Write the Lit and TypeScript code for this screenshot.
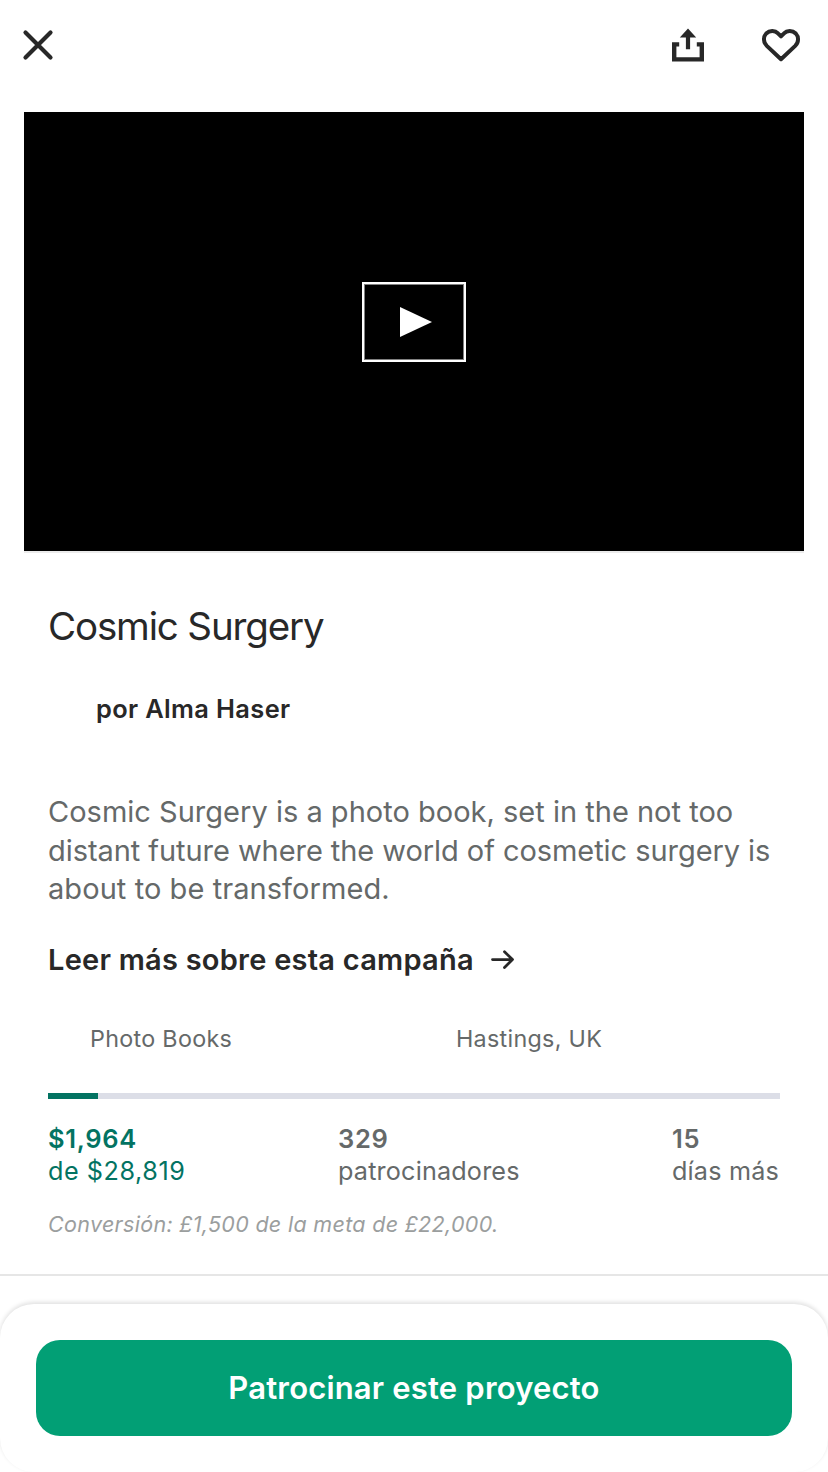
import { LitElement, html, css } from "lit";
import { customElement, property } from "lit/decorators.js";

@customElement("funding-bar")
class FundingBar extends LitElement {
  @property({ type: Number }) percent = 0;

  static styles = css`
    :host { display: block; height: 6px; background: #dcdee7; }
    .fill { height: 6px; background: #037362; }
  `;

  render() {
    return html`<div class="fill" style="width:${this.percent}%"></div>`;
  }
}

@customElement("app-root")
class AppRoot extends LitElement {
  static styles = css`
    :host {
      display: flex;
      flex-direction: column;
      height: 1472px;
      overflow: hidden;
      background: #fff;
      color: #282828;
      font-family: Inter, "Liberation Sans", sans-serif;
    }
    svg { display: block; }
    .toolbar { display: flex; align-items: center; height: 88px; padding: 1px 27px 0 22px; margin-bottom: 23px; }
    .spacer { flex: 1; }
    .toolbar .share { margin-right: 55px; }
    .video {
      display: flex; align-items: center; justify-content: center;
      flex: none; height: 439px; margin: 0 24px;
      background: #000; border-bottom: 2px solid #ebebeb;
    }
    .play {
      display: flex; align-items: center; justify-content: center;
      width: 100px; height: 76px; margin-bottom: 19px; border: 2px solid #fff;
      outline: 1px solid #808080; outline-offset: -3px;
    }
    .play svg { margin-left: 4px; }
    .body { padding: 49px 48px 36px; border-bottom: 2px solid #e6e6e6; white-space: nowrap; }
    .title { margin: 0; font-size: 38.5px; font-weight: 400; line-height: 48px; letter-spacing: -1.15px; }
    .author { margin: 43px 0 0 48px; font-size: 25.4px; font-weight: 600; line-height: 32px; letter-spacing: 0.37px; }
    .blurb { margin: 68px 0 0; font-size: 29px; line-height: 38.5px; color: #656969; }
    .l1 { letter-spacing: 0.01px; }
    .l2 { letter-spacing: -0.06px; }
    .l3 { letter-spacing: 0.07px; }
    .more { display: flex; align-items: center; margin-top: 33px; font-size: 29px; font-weight: 600; line-height: 36px; letter-spacing: 0.24px; }
    .more svg { margin-left: 17px; }
    .tags { display: grid; grid-template-columns: 366px 1fr; margin-top: 46px; padding-left: 42px; font-size: 23.3px; line-height: 30px; letter-spacing: 0.3px; color: #656969; }
    funding-bar { margin-top: 39px; }
    .stats { display: flex; margin-top: 24px; font-size: 25.2px; line-height: 32px; letter-spacing: 0.17px; color: #656969; }
    .stat strong { display: block; font-weight: 600; font-size: 25.5px; letter-spacing: 0.7px; }
    .stat.money { width: 290px; color: #037362; letter-spacing: 0.55px; }
    .stat.backers { width: 334px; }
    .convert { margin-top: 23px; font-size: 21.5px; font-style: italic; line-height: 28px; letter-spacing: 0.31px; color: #9b9e9e; }
    .sheet { flex: none; margin-top: 28px; padding: 36px; border-radius: 34px; background: #fff; box-shadow: 0 -2px 4px rgba(0, 0, 0, 0.12); }
    .pledge {
      display: block; width: 100%; height: 96px; padding: 0; border: 0; border-radius: 24px;
      background: #029f75; color: #fff; font-family: inherit; font-size: 31px; font-weight: 600; letter-spacing: 0.18px;
    }
  `;

  render() {
    return html`
      <header class="toolbar">
        <svg width="32" height="32" viewBox="0 0 32 32" fill="none" stroke="#282828" stroke-width="4.2" stroke-linecap="round">
          <path d="M3.5 3.5 28.5 28.5M28.5 3.5 3.5 28.5" />
        </svg>
        <span class="spacer"></span>
        <svg class="share" width="36" height="36" viewBox="0 0 36 36" fill="#282828">
          <path d="M18 1.4 26.200 10.600H20.100V22.200H15.900V10.600H9.800Z" />
          <path d="M9.200 17.400H4.200V32.400H31.800V17.400H26.800" fill="none" stroke="#282828" stroke-width="4.4" />
        </svg>
        <svg width="40" height="36" viewBox="0 0 40 36" fill="none" stroke="#282828" stroke-width="4" stroke-linejoin="round">
          <path d="M20 32.2 5.8 18.9C2 15.1 2.2 9.7 5.2 6.5C8.6 3.1 14 3.1 17 6.3L20 9.3 23 6.3C26 3.1 31.4 3.1 34.8 6.5C37.8 9.7 38 15.1 34.2 18.9Z" />
        </svg>
      </header>
      <section class="video">
        <div class="play">
          <svg width="32" height="30" viewBox="0 0 32 30" fill="#fff"><path d="M0 0 32 15 0 30Z" /></svg>
        </div>
      </section>
      <main class="body">
        <h1 class="title">Cosmic Surgery</h1>
        <div class="author">por Alma Haser</div>
        <p class="blurb">
          <span class="l1">Cosmic Surgery is a photo book, set in the not too</span><br />
          <span class="l2">distant future where the world of cosmetic surgery is</span><br />
          <span class="l3">about to be transformed.</span>
        </p>
        <div class="more">
          <span>Leer más sobre esta campaña</span>
          <svg width="24" height="20" viewBox="0 0 24 20" fill="none" stroke="#282828" stroke-width="2.8" stroke-linecap="round" stroke-linejoin="round">
            <path d="M1.5 9.6H21.5M13.5 1.8 21.5 9.6 13.5 17.4" />
          </svg>
        </div>
        <div class="tags"><span>Photo Books</span><span>Hastings, UK</span></div>
        <funding-bar .percent=${6.83}></funding-bar>
        <div class="stats">
          <div class="stat money"><strong>$1,964</strong><span>de $28,819</span></div>
          <div class="stat backers"><strong>329</strong><span>patrocinadores</span></div>
          <div class="stat"><strong>15</strong><span>días más</span></div>
        </div>
        <div class="convert">Conversión: £1,500 de la meta de £22,000.</div>
      </main>
      <footer class="sheet">
        <button class="pledge">Patrocinar este proyecto</button>
      </footer>
    `;
  }
}
